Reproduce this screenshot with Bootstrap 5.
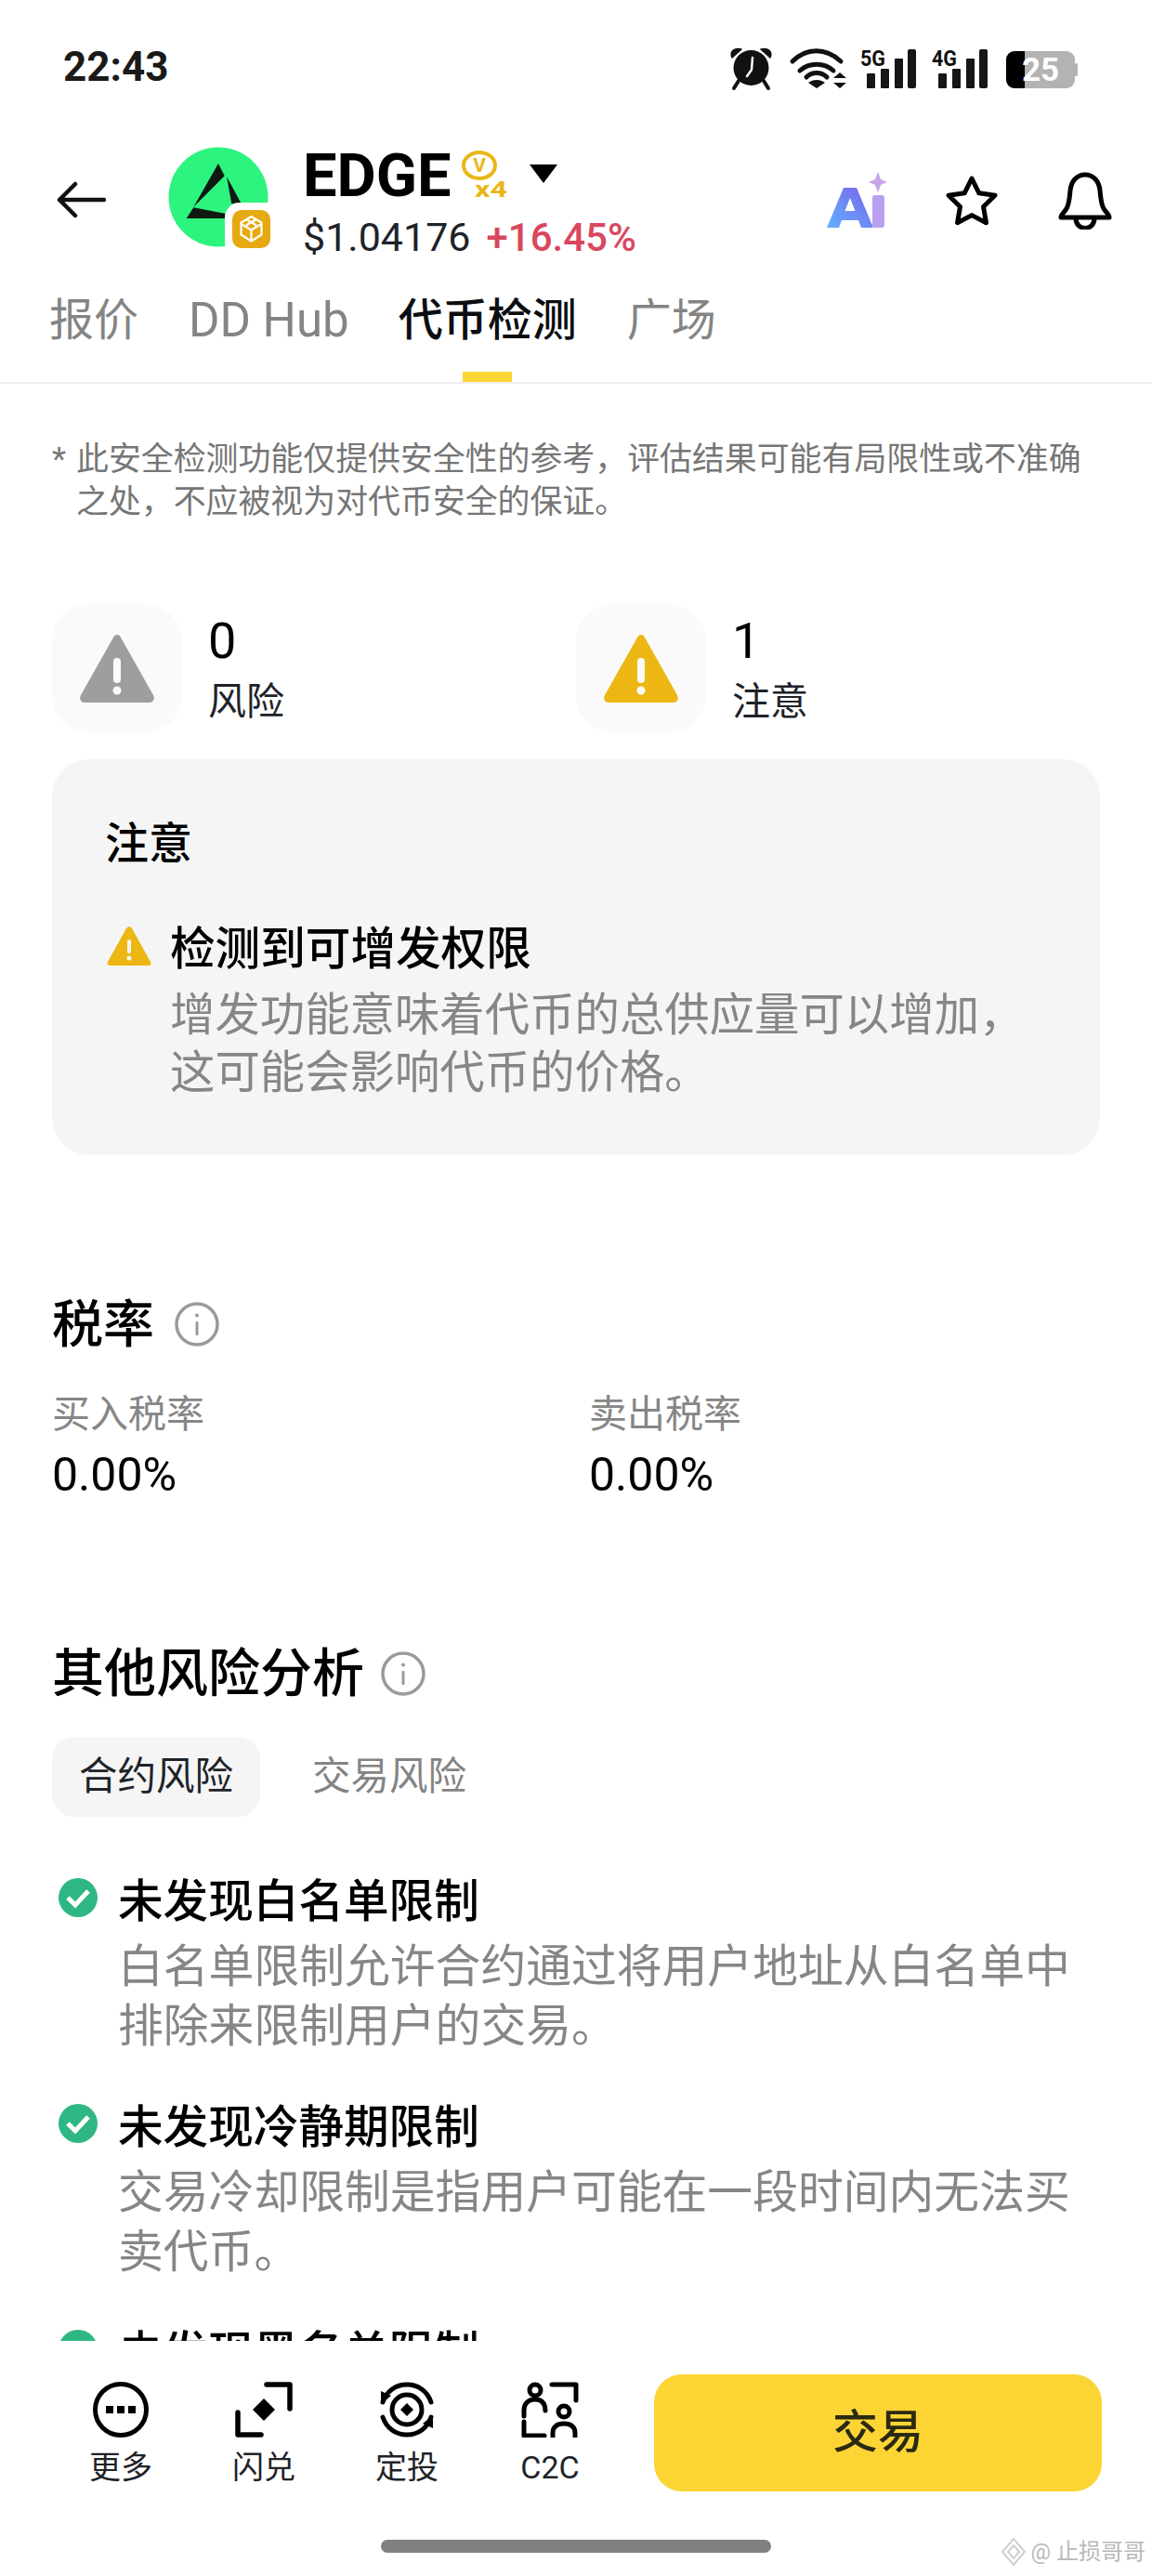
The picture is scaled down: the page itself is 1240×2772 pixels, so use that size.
<!DOCTYPE html>
<html lang="zh-CN">
  <head>
    <meta charset="UTF-8" />
    <title>EDGE 代币检测</title>
    <link rel="stylesheet" href="https://cdn.jsdelivr.net/npm/bootstrap@5.3.3/dist/css/bootstrap.min.css" />
    <style>
      body { margin: 0; background: #fff; color: #0b0e11; font-family: Roboto, "Noto Sans CJK SC", sans-serif; }
      .phone { width: 1240px; height: 2772px; position: relative; overflow: hidden; }
      .status-bar { height: 144px; padding: 0 68px; flex: none; }
      .clock { font-size: 44px; font-weight: 700; line-height: 60px; color: #1a1a1a; }
      .coin-head { height: 136px; padding-left: 60px; flex: none; }
      .logo-svg { margin-left: 66px; flex: none; }
      .coin-info { margin-left: 32px; padding-top: 15px; align-self: flex-start; }
      .coin-name { font-size: 65px; font-weight: 700; line-height: 60px; color: #000; }
      .vip-mark { margin: 3px 0 0 10px; overflow: visible; }
      .name-caret { margin: 18px 0 0 22px; }
      .coin-price { font-size: 43px; line-height: 50px; color: #1e2329; margin-top: 11px; }
      .coin-change { font-size: 42px; font-weight: 500; color: #d9475f; margin-left: 17px; }
      .head-tools { margin: 8px 43px 0 0; gap: 61px; }
      .tab-row { height: 133px; padding: 30px 0 0 53px; border-bottom: 2px solid #eee; flex: none; }
      .tab-link { font-size: 48px; line-height: 70px; color: #848484; margin-right: 54px; position: relative; height: 101px; }
      .tab-link.latin { font-size: 51px; margin-right: 53px; }
      .tab-link.on { color: #0b0e11; font-weight: 500; }
      .tab-link.on::after { content: ""; position: absolute; left: 69px; bottom: 0; width: 53px; height: 11px; background: #fcd535; }
      .scroll-body { flex: 1 1 auto; min-height: 0; overflow: hidden; padding: 59px 56px 0; }
      .notice { font-size: 34.9px; line-height: 46px; color: #767676; }
      .notice-star { width: 26px; flex: none; }
      .stat-row { margin-top: 86px; }
      .stat-col { width: 564px; flex: none; }
      .stat-box { width: 140px; height: 138px; border-radius: 40px; background: #fafafa; flex: none; }
      .stat-text { margin-left: 28px; padding-top: 10px; }
      .stat-num { font-size: 54px; line-height: 60px; color: #000; }
      .stat-label { font-size: 41px; line-height: 60px; margin-top: 5px; color: #1e2329; }
      .warn-card { margin-top: 29px; background: #f5f5f5; border-radius: 40px; padding: 61px 60px 57px 57px; }
      .warn-title { font-size: 47px; line-height: 60px; font-weight: 500; color: #000; }
      .warn-item { margin-top: 53px; margin-left: 2px; gap: 20px; }
      .warn-icon { width: 48px; height: 44px; flex: none; margin-top: 5px; }
      .item-title { font-size: 48.6px; line-height: 62px; font-weight: 500; color: #000; }
      .item-text { font-size: 48.4px; line-height: 62px; color: #868686; margin-top: 9px; }
      .sec-title { font-size: 55px; line-height: 70px; font-weight: 500; color: #000; gap: 22px; }
      .tax-head { margin-top: 147px; }
      .tax-col { width: 578px; flex: none; }
      .tax-label { font-size: 41px; line-height: 56px; color: #868686; margin-top: 34px; }
      .tax-value { font-size: 50px; line-height: 60px; color: #000; margin-top: 7px; }
      .other-head { margin-top: 149px; font-size: 56px; gap: 18px; }
      .risk-tabs { margin-top: 33px; gap: 27px; }
      .risk-tab { height: 86px; padding: 0 29px; font-size: 41.5px; line-height: 86px; color: #848484; border-radius: 24px; }
      .risk-tab.on { background: #f5f5f5; color: #1e2329; }
      .risk-item { margin-top: 46px; padding-left: 7px; gap: 22px; }
      .risk-item.first { margin-top: 61px; }
      .check-icon { width: 42px; height: 42px; flex: none; margin-top: 5px; }
      .risk-item .item-text { font-size: 48.8px; line-height: 64px; margin-top: 7px; }
      .foot-bar { height: 253px; background: #fff; padding: 36px 54px 0 53px; flex: none; position: relative; }
      .foot-col { width: 154px; padding-top: 8px; }
      .foot-col svg { display: block; }
      .foot-label { font-size: 34px; line-height: 40px; margin-top: 12px; color: #1e2329; }
      .trade-btn { width: 482px; height: 126px; margin-left: 35px; background: #fcd535; border: 0; border-radius: 30px; font-size: 49px; font-weight: 500; color: #2b2a12; }
      .home-pill { position: absolute; left: 410px; top: 214px; width: 420px; height: 14px; border-radius: 7px; background: #808080; }
      .mark-tag { position: absolute; right: 7px; bottom: 11px; font-size: 24px; line-height: 30px; color: #b9b9b9; white-space: nowrap; gap: 4px; }
    </style>
  </head>
  <body>
    <div class="phone d-flex flex-column">
      <!-- status bar -->
      <div class="status-bar d-flex align-items-center justify-content-between">
        <span class="clock">22:43</span>
        <svg width="392" height="60" viewBox="780 42 392 60">
          <!-- alarm -->
          <path d="M788 62c-3-7 3-11 10-9z M829 62c3-7-3-11-10-9z" fill="#111" stroke="#111" stroke-width="1.5" stroke-linejoin="round"/>
          <circle cx="808.500" cy="73" r="19" fill="#111"/>
          <path d="M795 87l-5 8 M822 87l5 8" stroke="#111" stroke-width="4" stroke-linecap="round"/>
          <path d="M810 62l-1 13-5 7" stroke="#fff" stroke-width="2.500" fill="none" stroke-linecap="round" stroke-linejoin="round"/>
          <!-- wifi -->
          <g fill="none" stroke="#111" stroke-width="5" stroke-linecap="round">
            <path d="M853 66c15-15 36-15 52 0"/>
            <path d="M861 76c10-9 26-9 36 0"/>
            <path d="M868 83c6-6 16-6 22 0"/>
          </g>
          <path d="M879 95l-9-6c5-4 13-4 18 0z" fill="#111"/>
          <path d="M904 78l-7 6h14z M904 95l-7-6h14z" fill="#111"/>
          <!-- 5G -->
          <text x="926" y="71" font-family="Roboto" font-weight="700" font-size="24" fill="#111" textLength="27" lengthAdjust="spacingAndGlyphs">5G</text>
          <g fill="#161616">
            <rect x="933" y="79" width="9" height="16" rx="1"/><rect x="948" y="74" width="9" height="21" rx="1"/><rect x="963" y="63" width="9" height="32" rx="1"/><rect x="977" y="53" width="9" height="42" rx="2"/>
          </g>
          <!-- 4G -->
          <text x="1003" y="71" font-family="Roboto" font-weight="700" font-size="24" fill="#111" textLength="27" lengthAdjust="spacingAndGlyphs">4G</text>
          <g fill="#161616">
            <rect x="1010" y="79" width="9" height="16" rx="1"/><rect x="1025" y="74" width="9" height="21" rx="1"/><rect x="1040" y="63" width="9" height="32" rx="1"/><rect x="1054" y="53" width="9" height="42" rx="2"/>
          </g>
          <!-- battery -->
          <rect x="1083" y="55" width="74" height="40" rx="9" fill="#b3b3b3"/>
          <rect x="1157" y="68" width="3" height="14" rx="1.500" fill="#b3b3b3"/>
          <path d="M1103 55h-11a9 9 0 0 0-9 9v22a9 9 0 0 0 9 9h11z" fill="#000"/>
          <text x="1100" y="87" font-family="Roboto" font-weight="700" font-size="35" fill="#fff">25</text>
        </svg>
      </div>

      <!-- coin header -->
      <div class="coin-head d-flex align-items-center">
        <svg width="54" height="40" viewBox="0 0 54 40" style="margin-top:6px">
          <path d="M4 20h48 M21 3L4 20l17 17" fill="none" stroke="#111" stroke-width="4.500" stroke-linecap="round" stroke-linejoin="round"/>
        </svg>
        <svg class="logo-svg" width="114" height="115" viewBox="180 155 114 115">
          <circle cx="235" cy="212" r="53.500" fill="#2df47e"/>
          <path d="M235 176l6.700 13.300-33.400 33.400z M244 190l15.300 28.300-10 1z M208.300 223.300l35 6.700-1.600 5h-41z" fill="#0d1a12"/>
          <rect x="242" y="218" width="60" height="60" rx="16" fill="#fff"/>
          <rect x="250" y="226" width="41" height="41" rx="10" fill="#e6a90f"/>
          <g fill="none" stroke="#fff" stroke-width="2.200" stroke-linejoin="round">
            <path d="M270.500 233l11 6.500v13l-11 7-11-7v-13z"/>
            <path d="M259.500 241l11 6.500 11-6.500 M270.500 247.500v11 M265 236l11 6.500 M276 236l-11 6.500"/>
          </g>
        </svg>
        <div class="coin-info">
          <div class="coin-name d-flex align-items-start">
            <span>EDGE</span>
            <svg class="vip-mark" width="52" height="52" viewBox="0 0 52 52">
              <ellipse cx="20" cy="16" rx="17" ry="14" fill="#fff" stroke="#e8b71a" stroke-width="4"/>
              <text x="20" y="23" text-anchor="middle" font-family="Roboto" font-weight="700" font-size="21" fill="#e8b71a">V</text>
              <text x="15" y="50" font-family="Roboto" font-weight="700" font-size="23" fill="#e8b71a" textLength="35" lengthAdjust="spacingAndGlyphs">x4</text>
            </svg>
            <svg class="name-caret" width="30" height="20" viewBox="0 0 30 20"><path d="M0 0h30L15 20z" fill="#000"/></svg>
          </div>
          <div class="coin-price">$1.04176<span class="coin-change">+16.45%</span></div>
        </div>
        <div class="head-tools d-flex align-items-center ms-auto">
          <svg width="66" height="62" viewBox="0 0 66 62">
            <defs>
              <linearGradient id="aiBlue" x1="0" y1="1" x2="1" y2="0"><stop offset="0" stop-color="#62b0ff"/><stop offset="1" stop-color="#7a62ea"/></linearGradient>
            </defs>
            <path d="M0 60L18 17h14l18 43H37l-3-8H16l-3 8z M19.500 42h11l-5.500-14z" fill="url(#aiBlue)" fill-rule="evenodd"/>
            <rect x="49" y="25" width="13" height="35" rx="3" fill="#b9a0f0"/>
            <path d="M55 0l3 8 7 3-7 3-3 8-3-8-7-3 7-3z" fill="#c3a5e8"/>
          </svg>
          <svg width="58" height="56" viewBox="0 0 58 56">
            <path d="M29 4l7.800 15.800 17.200 2.500-12.500 12.200 3 17.200L29 43.600l-15.500 8.100 3-17.200L4 22.300l17.200-2.500z" fill="none" stroke="#000" stroke-width="5" stroke-linejoin="round"/>
          </svg>
          <svg style="margin-left:3px" width="58" height="62" viewBox="0 0 58 62">
            <path d="M3 49c0-3 3-5 5-8 4-5 4-12 5-21C14 10 20 3 29 3s15 7 16 17c1 9 1 16 5 21 2 3 5 5 5 8z" fill="none" stroke="#000" stroke-width="5" stroke-linejoin="round"/>
            <path d="M19 50c0 14 20 14 20 0" fill="none" stroke="#000" stroke-width="5"/>
          </svg>
        </div>
      </div>

      <!-- tabs -->
      <div class="tab-row d-flex">
        <div class="tab-link">报价</div>
        <div class="tab-link latin">DD Hub</div>
        <div class="tab-link on">代币检测</div>
        <div class="tab-link">广场</div>
      </div>

      <div class="scroll-body">
        <div class="notice d-flex">
          <span class="notice-star">*</span>
          <span>此安全检测功能仅提供安全性的参考，评估结果可能有局限性或不准确之处，不应被视为对代币安全的保证。</span>
        </div>

        <div class="stat-row d-flex">
          <div class="stat-col d-flex">
            <div class="stat-box d-flex align-items-center justify-content-center">
              <svg width="84" height="76" viewBox="0 0 84 76"><path d="M42 2c2 0 3 1 4 3l35 62c2 4 0 8-4 8H7c-4 0-6-4-4-8L38 5c1-2 2-3 4-3z" fill="#9e9e9e"/><rect x="38" y="27" width="8" height="27" rx="4" fill="#fafafa"/><circle cx="42" cy="62" r="4.500" fill="#fafafa"/></svg>
            </div>
            <div class="stat-text">
              <div class="stat-num">0</div>
              <div class="stat-label">风险</div>
            </div>
          </div>
          <div class="stat-col d-flex">
            <div class="stat-box d-flex align-items-center justify-content-center">
              <svg width="84" height="76" viewBox="0 0 84 76"><path d="M42 2c2 0 3 1 4 3l35 62c2 4 0 8-4 8H7c-4 0-6-4-4-8L38 5c1-2 2-3 4-3z" fill="#ecb613"/><rect x="38" y="27" width="8" height="27" rx="4" fill="#fafafa"/><circle cx="42" cy="62" r="4.500" fill="#fafafa"/></svg>
            </div>
            <div class="stat-text">
              <div class="stat-num">1</div>
              <div class="stat-label">注意</div>
            </div>
          </div>
        </div>

        <div class="warn-card">
          <div class="warn-title">注意</div>
          <div class="warn-item d-flex">
            <svg class="warn-icon" viewBox="0 0 48 44"><path d="M24 1c1 0 2 1 3 2l20 36c1 2 0 4-2 4H3c-2 0-3-2-2-4L21 3c1-1 2-2 3-2z" fill="#ecb613"/><rect x="22" y="15" width="4" height="15" rx="2" fill="#f5f5f5"/><circle cx="24" cy="35" r="2.500" fill="#f5f5f5"/></svg>
            <div>
              <div class="item-title">检测到可增发权限</div>
              <div class="item-text">增发功能意味着代币的总供应量可以增加，这可能会影响代币的价格。</div>
            </div>
          </div>
        </div>

        <div class="sec-title tax-head d-flex align-items-center">
          <span>税率</span>
          <svg width="48" height="48" viewBox="0 0 48 48"><circle cx="24" cy="24" r="22" fill="none" stroke="#9a9a9a" stroke-width="3.500"/><rect x="22.500" y="21" width="3" height="15" rx="1" fill="#9a9a9a"/><circle cx="24" cy="14.500" r="2" fill="#9a9a9a"/></svg>
        </div>
        <div class="d-flex">
          <div class="tax-col">
            <div class="tax-label">买入税率</div>
            <div class="tax-value">0.00%</div>
          </div>
          <div class="tax-col">
            <div class="tax-label">卖出税率</div>
            <div class="tax-value">0.00%</div>
          </div>
        </div>

        <div class="sec-title other-head d-flex align-items-center">
          <span>其他风险分析</span>
          <svg width="48" height="48" viewBox="0 0 48 48"><circle cx="24" cy="24" r="22" fill="none" stroke="#9a9a9a" stroke-width="3.500"/><rect x="22.500" y="21" width="3" height="15" rx="1" fill="#9a9a9a"/><circle cx="24" cy="14.500" r="2" fill="#9a9a9a"/></svg>
        </div>
        <div class="risk-tabs d-flex">
          <div class="risk-tab on">合约风险</div>
          <div class="risk-tab">交易风险</div>
        </div>

        <div class="risk-item first d-flex">
          <svg class="check-icon" viewBox="0 0 42 42"><circle cx="21" cy="21" r="21" fill="#2fb783"/><path d="M10 21l8 8 14-15" fill="none" stroke="#fff" stroke-width="5"/></svg>
          <div>
            <div class="item-title">未发现白名单限制</div>
            <div class="item-text">白名单限制允许合约通过将用户地址从白名单中排除来限制用户的交易。</div>
          </div>
        </div>
        <div class="risk-item d-flex">
          <svg class="check-icon" viewBox="0 0 42 42"><circle cx="21" cy="21" r="21" fill="#2fb783"/><path d="M10 21l8 8 14-15" fill="none" stroke="#fff" stroke-width="5"/></svg>
          <div>
            <div class="item-title">未发现冷静期限制</div>
            <div class="item-text">交易冷却限制是指用户可能在一段时间内无法买卖代币。</div>
          </div>
        </div>
        <div class="risk-item d-flex">
          <svg class="check-icon" viewBox="0 0 42 42"><circle cx="21" cy="21" r="21" fill="#2fb783"/><path d="M10 21l8 8 14-15" fill="none" stroke="#fff" stroke-width="5"/></svg>
          <div>
            <div class="item-title">未发现黑名单限制</div>
          </div>
        </div>
      </div>

      <!-- bottom bar -->
      <div class="foot-bar d-flex align-items-start">
        <div class="foot-col d-flex flex-column align-items-center">
          <svg width="60" height="60" viewBox="0 0 60 60"><circle cx="30" cy="30" r="27.500" fill="none" stroke="#000" stroke-width="5"/><rect x="14" y="26" width="8" height="8" fill="#000"/><rect x="26" y="26" width="8" height="8" fill="#000"/><rect x="38" y="26" width="8" height="8" fill="#000"/></svg>
          <div class="foot-label">更多</div>
        </div>
        <div class="foot-col d-flex flex-column align-items-center">
          <svg width="62" height="60" viewBox="0 0 62 60"><path d="M34 3h25v26 M3 33v24h25" fill="none" stroke="#000" stroke-width="5.500" stroke-linecap="round" stroke-linejoin="round"/><path d="M31 18l12 12-12 12-12-12z" fill="#000"/></svg>
          <div class="foot-label">闪兑</div>
        </div>
        <div class="foot-col d-flex flex-column align-items-center">
          <svg width="62" height="60" viewBox="0 0 62 60">
            <g fill="none" stroke="#000" stroke-width="5" stroke-linecap="round">
              <path d="M5 22C9 10 19 3 31 3s22 7 26 19"/>
              <path d="M5 38c4 12 14 19 26 19s22-7 26-19"/>
              <circle cx="31" cy="30" r="16"/>
            </g>
            <path d="M31 23l7 7-7 7-7-7z" fill="#000"/>
            <path d="M3 24V10l11 5z M59 36v14l-11-5z" fill="#000"/>
          </svg>
          <div class="foot-label">定投</div>
        </div>
        <div class="foot-col d-flex flex-column align-items-center">
          <svg width="62" height="60" viewBox="0 0 62 60">
            <g fill="none" stroke="#000" stroke-width="5" stroke-linecap="round" stroke-linejoin="round">
              <circle cx="15" cy="9" r="6"/>
              <path d="M3 37v-6c0-9 6-12 12-12s11 3 11 12"/>
              <path d="M3 43v15h22"/>
              <path d="M33 3h26v17"/>
              <circle cx="46" cy="32" r="6"/>
              <path d="M34 59v-4c0-7 5-10 12-10s12 3 12 10v4"/>
            </g>
          </svg>
          <div class="foot-label">C2C</div>
        </div>
        <button type="button" class="trade-btn btn">交易</button>
        <div class="home-pill"></div>
        <div class="mark-tag d-flex align-items-center">
          <svg width="28" height="30" viewBox="0 0 28 30"><path d="M14 1l12 14-12 14L2 15z M14 8l6 7-6 7-6-7z" fill="none" stroke="#cfcfcf" stroke-width="2"/></svg>
          <span>@ 止损哥哥</span>
        </div>
      </div>
    </div>
    <script src="https://cdn.jsdelivr.net/npm/bootstrap@5.3.3/dist/js/bootstrap.bundle.min.js"></script>
  </body>
</html>
